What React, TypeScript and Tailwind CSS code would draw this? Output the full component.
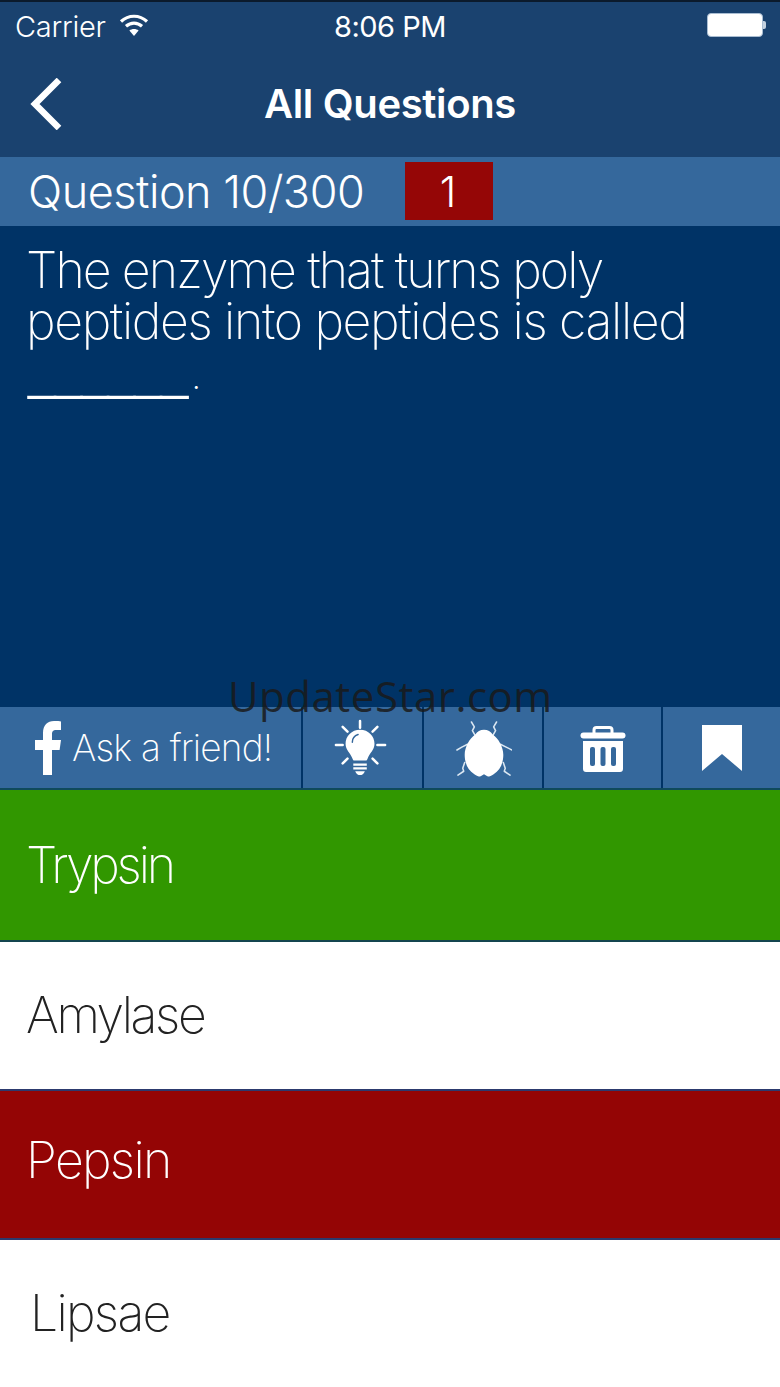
const sans = "font-['Inter','Liberation_Sans',sans-serif]";

function Wifi() {
  return (
    <svg width="30" height="24" viewBox="0 0 30 24" fill="none" stroke="white" strokeWidth="3.2">
      <path d="M2 8.500C9.500 1.500 20.500 1.500 28 8.500" />
      <path d="M7 13.200C11.800 9 18.200 9 23 13.200" />
      <path d="M15 23l-4.600-5.400c2.600-2 6.600-2 9.200 0z" fill="white" stroke="none" />
    </svg>
  );
}

function Battery() {
  return (
    <div className="flex items-center">
      <div className="w-[56px] h-[24px] rounded-[4px] bg-white border border-[#a9bdd2]" />
      <div className="w-[3px] h-[8px] rounded-r-[2px] bg-[#c5d2e0]" />
    </div>
  );
}

function Bulb() {
  return (
    <svg className="-ml-[3px]" width="54" height="58" viewBox="0 0 56 60" fill="white">
      <g stroke="white" strokeWidth="2.600" strokeLinecap="round">
        <path d="M27 2v7M9 8l5 5M45 8l-5 5M2 27h7M45 27h8M9 46l5-5M45 46l-5-5" />
      </g>
      <path d="M27 11c-8.700 0-15 6.600-15 14.600 0 6.400 5.200 9.800 7 15 .6 1.400 1 2.400 2 2.400h12c1 0 1.400-1 2-2.400 1.800-5.200 7-8.600 7-15C42 17.600 35.700 11 27 11z" />
      <path d="M20 46h14v2.400H20zM20 50h14v2.400H20zM22 54h10c-1 3-3 4-5 4s-4-1-5-4z" />
      <path d="M19 24c0-4 3-7 6-8" stroke="#35689c" strokeWidth="1.500" fill="none" strokeLinecap="round" />
    </svg>
  );
}

function Bug() {
  return (
    <svg className="mt-[4px] ml-[2px]" width="56" height="58" viewBox="0 0 58 60" fill="none">
      <g stroke="#dbe7f2" strokeWidth="1.600" strokeLinecap="round" strokeLinejoin="round">
        <path d="M16 1l3 5-2 4 4 7M42 1l-3 5 2 4-4 7" />
        <path d="M12 24l-6 3-5 3M46 24l6 3 6 3" />
        <path d="M9 43l-2 6 1 3-6 4M49 43l2 6-1 3 6 4" />
      </g>
      <path d="M29 9c4 0 7 2 9 5 6 4 11 13 11 21 0 8-3 16-10 20-3 2-6 3-7 2l-3-2-3 2c-1 1-4 0-7-2-7-4-10-12-10-20 0-8 5-17 11-21 2-3 5-5 9-5z" fill="white" />
    </svg>
  );
}

function Trash() {
  return (
    <svg className="mt-[3px]" width="46" height="48" viewBox="0 0 46 48" fill="none">
      <path d="M14 8V5c0-1.500 1-2.500 2.500-2.500h13C31 2.500 32 3.500 32 5v3" stroke="white" strokeWidth="3" />
      <rect x="0.500" y="7.500" width="45" height="6" rx="3" fill="white" />
      <path d="M3 16h40v28c0 2-1.200 3-3 3H6c-1.800 0-3-1-3-3z" fill="white" />
      <g fill="#35689c">
        <rect x="10" y="22" width="5" height="19" rx="2" />
        <rect x="20.500" y="22" width="5" height="19" rx="2" />
        <rect x="31" y="22" width="5" height="19" rx="2" />
      </g>
    </svg>
  );
}

export default function App() {
  return (
    <div className={`relative w-[780px] h-[1387px] overflow-hidden bg-white ${sans}`}>
      <div className="h-[157px] bg-[#1a426f] border-t-2 border-t-[#0b1a2c] text-white flex flex-col">
        <div className="h-[50px] px-[15px] flex items-center relative">
          <span className="text-[29px] tracking-[-0.250px] font-light">Carrier</span>
          <span className="ml-[13px] -mt-[5px]"><Wifi /></span>
          <span className="absolute left-0 right-0 text-center text-[29px] font-normal tracking-[-0.500px]">8:06 PM</span>
          <span className="ml-auto -mt-[5px] -mr-[1px]"><Battery /></span>
        </div>
        <div className="relative flex-1 flex items-center justify-center">
          <svg className="absolute left-[28px] top-[26px]" width="36" height="52" viewBox="0 0 36 52" fill="none" stroke="white" strokeWidth="6.500">
            <path d="M31 2L7 26l24 24" />
          </svg>
          <span className="text-[40px] font-semibold tracking-[-0.350px] -mt-[1px]">All Questions</span>
        </div>
      </div>

      <div className="h-[69px] bg-[#35689c] flex items-center pl-[28px] text-white">
        <span className="text-[45px] font-light tracking-[-0.500px] w-[377px] whitespace-nowrap mt-[1px]">Question 10/300</span>
        <div className="w-[88px] h-[58px] bg-[#950606] flex items-center justify-center text-[42px] font-light pr-[2px] -mt-[1px]">1</div>
      </div>

      <div className="h-[481px] bg-[#003366] pl-[26px] pt-[19px] text-white text-[50px] leading-[51px] font-extralight">
        <p className="tracking-[-1.900px] whitespace-nowrap">The enzyme that turns poly</p>
        <p className="tracking-[-1.350px] whitespace-nowrap">peptides into peptides is called</p>
        <p className="pl-[2px] whitespace-nowrap -mt-[1px]"><span className="font-['Liberation_Sans',sans-serif] tracking-[-1.300px]">______</span><span className="text-[38px] ml-[4px]">.</span></p>
      </div>

      <div className="h-[83px] bg-[#003366] flex text-white border-b-2 border-b-[#0f4a5c]">
        <div className="w-[303px] bg-[#35689c] border-r-2 border-[#003366] flex items-center pl-[35px]">
          <svg width="27" height="54" viewBox="0 0 27 54" fill="white">
            <path d="M8 54V29H0v-10h8v-7C8 4 12.500 0 19 0c3 0 6 .2 7 .4v8.600h-4.500C17.500 9 17 11 17 13.500V19h9l-1.400 10H17v25z" />
          </svg>
          <span className="ml-[10px] text-[37px] font-extralight tracking-[-0.800px] whitespace-nowrap">Ask a friend!</span>
        </div>
        <div className="w-[121px] bg-[#35689c] border-r-2 border-[#003366] flex items-center justify-center"><Bulb /></div>
        <div className="w-[120px] bg-[#35689c] border-r-2 border-[#003366] flex items-center justify-center"><Bug /></div>
        <div className="w-[119px] bg-[#35689c] border-r-2 border-[#003366] flex items-center justify-center"><Trash /></div>
        <div className="flex-1 bg-[#35689c] flex items-center justify-center">
          <svg width="40" height="46" viewBox="0 0 40 46" fill="white"><path d="M0 0h40v46L20 29 0 46z" /></svg>
        </div>
      </div>

      <div className="h-[152px] bg-[#319700] border-b-2 border-b-[#14454f] flex items-center pl-[26px] text-[50px] font-extralight tracking-[-3.200px] text-white">Trypsin</div>
      <div className="h-[147px] bg-white flex items-center pl-[26px] text-[50px] font-extralight tracking-[-2.400px] text-[#222222]">Amylase</div>
      <div className="h-[151px] bg-[#940505] border-y-2 border-y-[#2c3a6e] flex items-center pl-[26px] pb-[8px] text-[50px] font-extralight tracking-[-1.700px] text-white">Pepsin</div>
      <div className="h-[147px] bg-white flex items-center pl-[30px] text-[50px] font-extralight tracking-[-1.700px] text-[#222222]">Lipsae</div>

      <span className="absolute left-[228px] top-[670px] font-['Open_Sans',sans-serif] text-[42px] leading-[52px] tracking-[0.500px] text-[#1a1a1a]/85">UpdateStar.com</span>
    </div>
  );
}
